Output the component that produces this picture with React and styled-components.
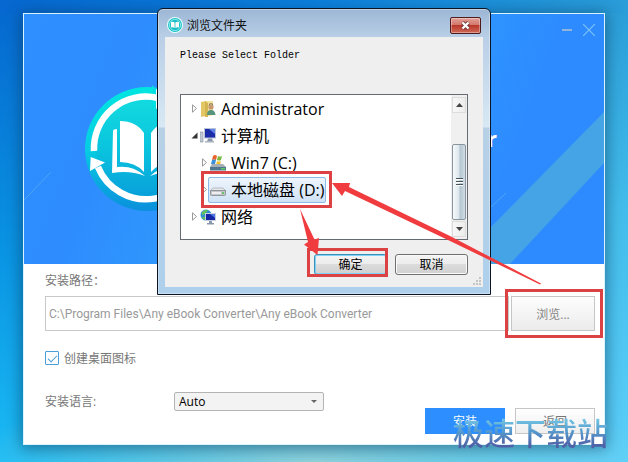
import React, { useState } from 'react';
import styled, { createGlobalStyle } from 'styled-components';

const GlobalStyle = createGlobalStyle`
  * {
    box-sizing: border-box;
  }

  body {
    margin: 0;
    font-family: 'Open Sans', 'Noto Sans CJK SC', sans-serif;
    font-size: 12px;
  }

  button, input, select {
    font: inherit;
    margin: 0;
  }
`;

const Desktop = styled.main`
  position: relative;
  min-height: 100vh;
  padding: 13px 23px 17px;
  overflow: hidden;
  background:
    radial-gradient(ellipse 55% 80px at 50% 100%, #8fd3dc 0%, #84cfdc00 100%),
    linear-gradient(to right, #0668d0 0%, #0b7fdc 50%, #2b9dd8 100%) 0 0 / 100% 13px no-repeat,
    linear-gradient(to bottom, #2a9dd8 0%, #43bdec 45%, #5cd0fa 100%) 100% 0 / 30px 100% no-repeat,
    linear-gradient(to right, transparent 50%, #5cd0fa 95%) 0 100% / 100% 30px no-repeat,
    linear-gradient(to bottom, #0668d0 0%, #0a95e4 55%, #1cbcf5 100%);
`;

const Installer = styled.section`
  border: 1px solid #d9f4ff;
  background: #fff;
  box-shadow: 0 2px 14px 2px rgba(10, 50, 80, 0.5);
`;

const Hero = styled.header`
  position: relative;
  display: flex;
  align-items: center;
  justify-content: space-between;
  height: 250px;
  padding: 18px 107px 0 60px;
  background: linear-gradient(110deg, #2e8fff 0%, #2e8cfe 18%, #2f9ffc 45%, #2e97ff 65%, #2d8aff 82%);
`;

const HeroShapes = styled.svg`
  position: absolute;
  right: 0;
  bottom: 0;
`;

const HeroStreak = styled.svg`
  position: absolute;
  left: 0;
  bottom: 63px;
`;

const ProductName = styled.h1`
  margin: 0;
  padding-bottom: 20px;
  color: #fff;
  font-size: 22px;
  font-weight: 700;
  line-height: 30px;
`;

const WindowControls = styled.div`
  position: absolute;
  top: 8px;
  right: 7px;
  display: flex;
  gap: 6px;
`;

const WindowControl = styled.button`
  display: grid;
  place-items: center;
  width: 16px;
  height: 16px;
  padding: 0;
  border: 0;
  background: none;
  color: ${({ $dim }) => ($dim ? '#8fb4dd' : '#7cc3f5')};
`;

const Body = styled.div`
  padding: 7px 9px 10px 21px;
  color: #777;
`;

const FieldLabel = styled.label`
  display: block;
  line-height: 20px;
`;

const PathRow = styled.div`
  display: flex;
  gap: 2px;
  height: 35px;
  margin-top: 5px;
`;

const PathInput = styled.input`
  flex: 1;
  min-width: 0;
  padding: 0 3px;
  border: 1px solid #c8c8c8;
  background: #fff;
  color: #999;
  font-family: Roboto, sans-serif;
`;

const BrowseButton = styled.button`
  width: 84px;
  padding: 0;
  border: 1px solid #c6c6c6;
  background: linear-gradient(#fdfdfd, #ececec);
  color: #858585;
`;

const CheckRow = styled.label`
  display: flex;
  align-items: center;
  gap: 5px;
  height: 20px;
  margin-top: 17px;
`;

const Checkbox = styled.input`
  appearance: none;
  display: grid;
  place-items: center;
  width: 14px;
  height: 14px;
  border: 1px solid #4a9fd8;
  border-radius: 1px;
  background: #fff;

  &:checked::after {
    content: '';
    width: 8px;
    height: 4px;
    margin-top: -2px;
    border: solid #4a9fd8;
    border-width: 0 0 1px 1px;
    transform: rotate(-45deg);
  }
`;

const Footer = styled.footer`
  display: flex;
  justify-content: space-between;
  height: 42px;
  margin-top: 24px;
`;

const Language = styled.div`
  display: flex;
  align-items: flex-start;
  line-height: 20px;
`;

const LanguageLabel = styled.label`
  width: 129px;
`;

const SelectWrap = styled.div`
  display: flex;
  position: relative;

  &::after {
    content: '';
    position: absolute;
    right: 7px;
    top: 8px;
    border: solid transparent;
    border-width: 3px 3px 0;
    border-top-color: #666;
    pointer-events: none;
  }
`;

const Select = styled.select`
  appearance: none;
  width: 150px;
  height: 19px;
  padding: 0 4px;
  border: 1px solid #b4b4b4;
  border-radius: 2px;
  background: #f3f3f3;
  color: #000;
  line-height: 16px;
`;

const Actions = styled.div`
  display: flex;
  align-items: flex-end;
  gap: 10px;
`;

const ActionButton = styled.button`
  width: 80px;
  height: 26px;
  padding: 0;
  border: 1px solid ${({ $primary }) => ($primary ? '#2d8fff' : '#c6c6c6')};
  background: ${({ $primary }) => ($primary ? '#2d8fff' : 'linear-gradient(#fff, #eee)')};
  color: ${({ $primary }) => ($primary ? '#fff' : '#777')};
`;

const Dialog = styled.section`
  position: absolute;
  left: 157px;
  top: 8px;
  width: 334px;
  padding: 0 7px 7px;
  border: 1px solid #0b1420;
  border-radius: 6px 6px 0 0;
  background: linear-gradient(#9cb6d4 0, #b9cfe7 28px, #d8e8f4 118px, #b7d0e6 119px, #aed0ec 100%);
  box-shadow: inset 0 0 0 1px rgba(255, 255, 255, 0.35);
`;

const TitleBar = styled.header`
  display: flex;
  align-items: center;
  gap: 4px;
  height: 28px;
  padding: 4px 2px 0;
`;

const DialogTitle = styled.h2`
  flex: 1;
  margin: 0;
  color: #111;
  font-size: 12px;
  font-weight: 400;
`;

const CloseButton = styled.button`
  display: grid;
  place-items: center;
  width: 31px;
  height: 17px;
  padding: 0;
  border: 1px solid #4e1a1c;
  border-radius: 2px;
  background: linear-gradient(#e2a29a 0%, #d2756a 48%, #b9382b 50%, #cf6a58 100%);
  box-shadow: inset 0 0 0 1px rgba(255, 255, 255, 0.35);
`;

const Client = styled.div`
  position: relative;
  padding: 12px 15px;
  background: #efefef;
`;

const Prompt = styled.p`
  margin: 0 0 31px;
  color: #000;
  font-family: 'Liberation Mono', monospace;
  font-size: 10px;
  line-height: 14px;
`;

const TreeBox = styled.div`
  display: flex;
  height: 146px;
  border: 1px solid #666b73;
  background: #fff;
`;

const Tree = styled.ul`
  flex: 1;
  margin: 0;
  padding: 0;
  list-style: none;
`;

const TreeNode = styled.li`
  display: flex;
  align-items: center;
  height: 27px;
  padding-left: ${({ $level }) => 10 + $level * 10}px;
`;

const Toggle = styled.svg`
  width: 7px;
  height: 9px;
`;

const NodeContent = styled.div`
  display: flex;
  align-items: center;
  gap: 5px;
  height: 26px;
  padding: 0 1px;
  border: 1px solid ${({ $selected }) => ($selected ? '#8db9e8' : 'transparent')};
  border-radius: 2px;
  background: ${({ $selected }) => ($selected ? 'linear-gradient(#eef5fc, #cfe2f6)' : 'none')};
  color: #000;
  font-size: 16px;
  line-height: 24px;
  white-space: nowrap;
`;

const Scrollbar = styled.div`
  display: flex;
  flex-direction: column;
  width: 16px;
  padding: 2px 1px;
  background: #f0f0f0;
`;

const ScrollButton = styled.button`
  display: grid;
  place-items: center;
  height: 16px;
  padding: 0;
  border: 1px solid #dcdcdc;
  background: linear-gradient(to right, #f8f8f8, #ececec);
`;

const Thumb = styled.div`
  display: flex;
  flex: 1;
  flex-direction: column;
  align-items: center;
  justify-content: center;
  gap: 1px;
  margin: 31px 0 1px;
  border: 1px solid #8a949c;
  border-radius: 2px;
  background: linear-gradient(to right, #f6fafc, #dfe9ef 45%, #b5c6d1 60%, #cfdde5);
`;

const ThumbLine = styled.span`
  width: 7px;
  height: 2px;
  border-top: 1px solid #46525c;
  background: #fff;
`;

const DialogActions = styled.div`
  display: flex;
  justify-content: flex-end;
  gap: 8px;
  margin-top: 14px;
`;

const DialogButton = styled.button`
  width: 73px;
  height: 21px;
  padding: 0;
  border: 1px solid ${({ $default }) => ($default ? '#3c8fb8' : '#707070')};
  border-radius: 3px;
  background: linear-gradient(#f4f4f4 0%, #ececec 48%, #dcdcdc 50%, #d0d0d0 100%);
  box-shadow: inset 0 0 0 1px ${({ $default }) => ($default ? '#7fd2f4' : '#fafafa')};
  color: #000;
  line-height: 17px;
`;

const Grip = styled.svg`
  position: absolute;
  right: 2px;
  bottom: 2px;
`;

const Markup = styled.svg`
  position: absolute;
  left: 0;
  top: 0;
  pointer-events: none;
`;

const Watermark = styled.p`
  position: absolute;
  right: 20px;
  bottom: 8px;
  margin: 0;
  background: linear-gradient(#73c6e4 20%, #5698cc 50%, #4f5fa6 82%);
  background-clip: text;
  color: transparent;
  font-family: 'Noto Sans CJK SC', sans-serif;
  font-size: 31px;
  font-weight: 500;
  line-height: 44px;
  pointer-events: none;
`;

const Logo = () => (
  <svg width="126" height="126" viewBox="0 0 126 126" aria-hidden="true">
    <defs>
      <linearGradient id="logo-fill" x1="0" y1="0" x2="0" y2="1">
        <stop offset="0" stopColor="#00e6e0" />
        <stop offset="0.5" stopColor="#06cde2" />
        <stop offset="1" stopColor="#0a8fdc" />
      </linearGradient>
      <linearGradient id="logo-inner" x1="0" y1="0" x2="0" y2="1">
        <stop offset="0" stopColor="#12dadf" />
        <stop offset="0.5" stopColor="#0ac4de" />
        <stop offset="1" stopColor="#089edb" />
      </linearGradient>
    </defs>
    <circle cx="63" cy="64" r="62" fill="url(#logo-fill)" />
    <circle cx="62" cy="64" r="50" fill="url(#logo-inner)" />
    <path d="M68 0l12 12-12 13z" fill="#00dfe2" />
    <path d="M10 66A52 52 0 0 1 74 13" fill="none" stroke="#fff" strokeWidth="6.500" />
    <path d="M14 82A52 52 0 0 0 114 66A52 52 0 0 0 100 28" fill="none" stroke="#fff" strokeWidth="6.500" />
    <path d="M72 4l16 10-16 10z" fill="#fff" />
    <path d="M6.700 72L21 77.500 6 86z" fill="#fff" />
    <path d="M29 46q0-2 4-2v38q16-2 28 9-15-6-33-3zM98 46q0-2-4-2v38q-16-2-28 9 15-6 33-3z" fill="#fff" />
    <path d="M36 36q16 0 24 12v39q-9-10-24-10zM91 36q-16 0-24 12v39q9-10 24-10z" fill="#fff" />
  </svg>
);

const AppIcon = () => (
  <svg width="16" height="16" viewBox="0 0 16 16" aria-hidden="true">
    <circle cx="8" cy="8" r="8" fill="#e9ffff" />
    <circle cx="8" cy="8" r="7" fill="#19bfc6" />
    <circle cx="8" cy="8" r="5.600" fill="none" stroke="#9df1f0" strokeWidth="0.8" />
    <path d="M4 5q2-.6 3.600.5v5.500q-1.600-1-3.600-.5zM12 5q-2-.6-3.600.5v5.500q1.600-1 3.600-.5z" fill="#fff" />
  </svg>
);

const UserFolderIcon = () => (
  <svg width="16" height="18" viewBox="0 0 16 18" aria-hidden="true">
    <path d="M1 2l5-1v15l-5 1z" fill="#e2c764" />
    <path d="M5 1h8v14l-8 2z" fill="#f3e29a" />
    <path d="M5 1l3 2v14l-3 0z" fill="#d4b553" />
    <circle cx="11" cy="7" r="2.600" fill="#c79a72" />
    <path d="M8.500 6q2.500-4 5 0l-1-2.500h-3z" fill="#5e5140" />
    <path d="M7 15q0-5 4-5t4.500 5z" fill="#56947b" />
  </svg>
);

const ComputerIcon = () => (
  <svg width="16" height="16" viewBox="0 0 16 16" aria-hidden="true">
    <path d="M0 4h3v10h-3z" fill="#c3cdd8" stroke="#7f8b9b" strokeWidth="0.6" />
    <path d="M4 0h12v10.500H4z" fill="#b9c2d6" />
    <path d="M5 1h10v8.500H5z" fill="#1b2ca8" />
    <path d="M9 1h6v5z" fill="#5e83e8" />
    <path d="M8 10.500h4l1 3h-6z" fill="#8a96ad" />
    <path d="M5 13h9v1.500h-9z" fill="#a8b3c2" />
  </svg>
);

const SystemDriveIcon = () => (
  <svg width="16" height="18" viewBox="0 0 16 18" aria-hidden="true">
    <path d="M3 2q2-2 4 0l-1 4q-2-1-4 0z" fill="#e8622c" />
    <path d="M8 2q2 1 4 0l-1 4q-2 1-4 0z" fill="#7cb83c" />
    <path d="M2 6q2-1 4 0l-1 4h-4z" fill="#3b8fd8" />
    <path d="M7 7q2 1 4 0l-1 4h-4z" fill="#f2bd2d" />
    <path d="M2 10h11l3 3H0z" fill="#a5aeb4" />
    <path d="M0 13h16v3.500H0z" fill="#4f7890" />
    <path d="M11 14h4v1.500h-4z" fill="#5bd05c" />
  </svg>
);

const DriveIcon = () => (
  <svg width="16" height="16" viewBox="0 0 16 16" aria-hidden="true">
    <path d="M3 6h10l3 3H0z" fill="#e4e6e8" stroke="#a5a9ad" strokeWidth="0.7" />
    <path d="M.5 8.500h15v4q0 1-1 1h-13q-1 0-1-1z" fill="#c2c6ca" stroke="#83888d" strokeWidth="0.8" />
    <path d="M2 10h9v2h-9z" fill="#eceeef" />
    <path d="M12 10h2v2h-2z" fill="#6cc46c" />
  </svg>
);

const NetworkIcon = () => (
  <svg width="16" height="16" viewBox="0 0 16 16" aria-hidden="true">
    <circle cx="6" cy="6" r="5.500" fill="#3190cd" />
    <path d="M2 3q4-3 6-2l-3 4-3 1zM2 8l3 0 1 3q-3 0-4-3z" fill="#65c45c" />
    <path d="M5 4h11v8H5z" fill="#c7cedd" />
    <path d="M6 5h9v6H6z" fill="#1426a3" />
    <path d="M10 5h5v4z" fill="#4d77e4" />
    <path d="M9 12h3v2h2v1.500H7V14h2z" fill="#8a96ab" />
  </svg>
);

const Chevron = ({ open }) => (
  <Toggle viewBox="0 0 7 9" aria-hidden="true">
    {open
      ? <path d="M6.500 1.500v6h-6z" fill="#333" />
      : <path d="M1.500 .8v7.400L5.500 4.500z" fill="#fff" stroke="#999" />}
  </Toggle>
);

const nodes = [
  { id: 'admin', label: 'Administrator', level: 0, icon: UserFolderIcon },
  { id: 'computer', label: '计算机', level: 0, icon: ComputerIcon, open: true },
  { id: 'c', label: 'Win7 (C:)', level: 1, icon: SystemDriveIcon },
  { id: 'd', label: '本地磁盘 (D:)', level: 1, icon: DriveIcon },
  { id: 'network', label: '网络', level: 0, icon: NetworkIcon },
];

function FolderDialog() {
  const [selected, setSelected] = useState('d');

  return (
    <Dialog role="dialog" aria-labelledby="dialog-title">
      <TitleBar>
        <AppIcon />
        <DialogTitle id="dialog-title">浏览文件夹</DialogTitle>
        <CloseButton aria-label="关闭">
          <svg width="11" height="9" viewBox="0 0 11 9">
            <path d="M2.500 1.500l6 6M8.500 1.500l-6 6" stroke="#6b3434" strokeWidth="4" />
            <path d="M2.500 1.500l6 6M8.500 1.500l-6 6" stroke="#fff" strokeWidth="2.400" />
          </svg>
        </CloseButton>
      </TitleBar>
      <Client>
        <Prompt>Please Select Folder</Prompt>
        <TreeBox>
          <Tree role="tree">
            {nodes.map(({ id, label, level, icon: Icon, open }) => (
              <TreeNode
                key={id}
                role="treeitem"
                aria-selected={selected === id}
                $level={level}
                onClick={() => setSelected(id)}
              >
                <Chevron open={open} />
                <NodeContent $selected={selected === id}>
                  <Icon />
                  <span>{label}</span>
                </NodeContent>
              </TreeNode>
            ))}
          </Tree>
          <Scrollbar>
            <ScrollButton aria-label="向上">
              <svg width="7" height="4" viewBox="0 0 7 4"><path d="M0 4L3.500 0 7 4z" fill="#444" /></svg>
            </ScrollButton>
            <Thumb>
              <ThumbLine />
              <ThumbLine />
              <ThumbLine />
            </Thumb>
            <ScrollButton aria-label="向下">
              <svg width="7" height="4" viewBox="0 0 7 4"><path d="M0 0L3.500 4 7 0z" fill="#444" /></svg>
            </ScrollButton>
          </Scrollbar>
        </TreeBox>
        <DialogActions>
          <DialogButton $default>确定</DialogButton>
          <DialogButton>取消</DialogButton>
        </DialogActions>
        <Grip width="8" height="8" viewBox="0 0 8 8" aria-hidden="true">
          <path d="M6 0h2v2h-2zM3 3h2v2h-2zM6 3h2v2h-2zM0 6h2v2h-2zM3 6h2v2h-2zM6 6h2v2h-2z" fill="#c4c4c4" />
        </Grip>
      </Client>
    </Dialog>
  );
}

// red boxes and arrows that walk through the steps
const StepMarkup = () => (
  <Markup width="628" height="462" viewBox="0 0 628 462" aria-hidden="true">
    <g fill="none" stroke="#dc4144">
      <rect x="202.500" y="172.500" width="128" height="34" strokeWidth="3" />
      <rect x="308.500" y="249.500" width="78" height="26" strokeWidth="3" />
      <rect x="506.500" y="290.500" width="95" height="46" strokeWidth="3" />
    </g>
    <g fill="#f03c3e">
      <path d="M332 183L350 183 349 187 450 236 541 283.500 540 284.500 448 240 345 191 342 196z" />
      <path d="M300 209L314.500 239.500 319 238 317.500 255 304 244.500 308 242z" />
    </g>
  </Markup>
);

function App() {
  const [shortcut, setShortcut] = useState(true);

  return (
    <Desktop>
      <GlobalStyle />
      <Installer>
        <Hero>
          <HeroShapes width="114" height="153" viewBox="0 0 114 153" aria-hidden="true">
            <path d="M0 117L114 1V52L20 153H0z" fill="#45a4e6" />
            <path d="M0 97L16 82" stroke="#4fa6f4" />
          </HeroShapes>
          <HeroStreak width="28" height="30" viewBox="0 0 28 30" aria-hidden="true">
            <path d="M0 29L27 1" stroke="#4aa6f4" />
          </HeroStreak>
          <Logo />
          <ProductName>Any eBook Converter</ProductName>
          <WindowControls>
            <WindowControl $dim aria-label="最小化">
              <svg width="10" height="2" viewBox="0 0 10 2"><path d="M0 1h10" stroke="currentColor" strokeWidth="2" /></svg>
            </WindowControl>
            <WindowControl aria-label="关闭安装程序">
              <svg width="12" height="12" viewBox="0 0 12 12"><path d="M0 0l12 12M12 0L0 12" stroke="currentColor" strokeWidth="1.200" /></svg>
            </WindowControl>
          </WindowControls>
        </Hero>
        <Body>
          <FieldLabel htmlFor="path">安装路径：</FieldLabel>
          <PathRow>
            <PathInput id="path" defaultValue="C:\Program Files\Any eBook Converter\Any eBook Converter" />
            <BrowseButton>浏览...</BrowseButton>
          </PathRow>
          <CheckRow>
            <Checkbox type="checkbox" checked={shortcut} onChange={() => setShortcut(!shortcut)} />
            创建桌面图标
          </CheckRow>
          <Footer>
            <Language>
              <LanguageLabel htmlFor="language">安装语言:</LanguageLabel>
              <SelectWrap>
                <Select id="language">
                  <option>Auto</option>
                </Select>
              </SelectWrap>
            </Language>
            <Actions>
              <ActionButton $primary>安装</ActionButton>
              <ActionButton>返回</ActionButton>
            </Actions>
          </Footer>
        </Body>
      </Installer>
      <FolderDialog />
      <StepMarkup />
      <Watermark>极速下载站</Watermark>
    </Desktop>
  );
}

export default App;
